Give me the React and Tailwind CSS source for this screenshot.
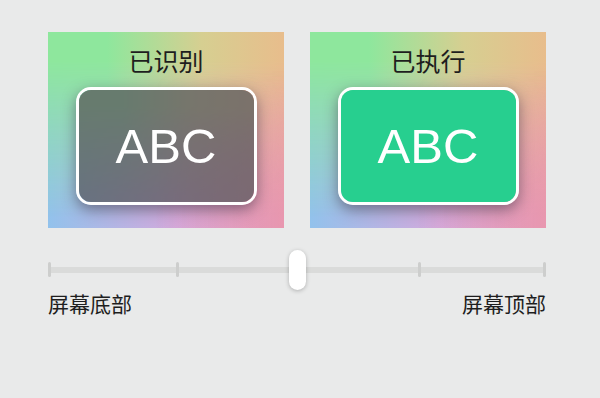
const cjk = { fontFamily: '"Noto Sans CJK SC", "Noto Sans", sans-serif' };
const latin = { fontFamily: '"Liberation Sans", Arial, sans-serif' };

function Rainbow() {
  return (
    <>
      <div className="absolute inset-0 bg-[linear-gradient(to_right,#92c2ec,#d3a9dc_55%,#e898b6)]" />
      <div className="absolute inset-0 bg-[linear-gradient(to_right,#8ee79d_25%,#d6cf91_65%,#e8bd8c)] [mask-image:linear-gradient(to_bottom,black_15%,rgba(0,0,0,0.55)_50%,transparent_95%)]" />
      <div className="absolute inset-0 bg-[linear-gradient(to_right,transparent_45%,rgba(232,150,170,0.55))] [mask-image:linear-gradient(to_bottom,transparent_20%,black_80%)]" />
    </>
  );
}

function RainbowPanel({ label, children }) {
  return (
    <div className="relative h-[196px] overflow-hidden">
      <Rainbow />
      <div className="relative flex flex-col items-center pt-[13px]">
        <div className="text-[25px] leading-[30px] text-[#1e1e1e]" style={cjk}>
          {label}
        </div>
        <div className="mt-[12px]">{children}</div>
      </div>
    </div>
  );
}

function Tag({ tone }) {
  return (
    <div className="relative h-[118px] w-[181px] overflow-hidden rounded-[15px] border-[3px] border-white shadow-[0_5px_14px_rgba(50,40,60,0.5)]">
      {tone === 'dim' ? (
        <>
          <Rainbow />
          <div className="absolute inset-0 bg-[rgba(92,92,98,0.78)]" />
        </>
      ) : (
        <div className="absolute inset-0 bg-[#27cf8f]" />
      )}
      <div
        className="relative flex h-full items-center justify-center text-[49px] leading-none text-white"
        style={latin}
      >
        ABC
      </div>
    </div>
  );
}

export default function App() {
  const ticks = [0, 128, 370, 495];

  return (
    <div className="h-[398px] w-[600px] bg-[#e9eaea] px-[48px] pt-[32px]">
      <div className="grid grid-cols-2 gap-[26px] pr-[6px]">
        <RainbowPanel label="已识别">
          <Tag tone="dim" />
        </RainbowPanel>
        <RainbowPanel label="已执行">
          <Tag tone="green" />
        </RainbowPanel>
      </div>

      <div className="relative mt-[22px] h-[40px] w-[498px]">
        <div className="absolute left-0 right-0 top-[17px] h-[6px] rounded-full bg-[#dadbda]" />
        {ticks.map((x) => (
          <div
            key={x}
            className="absolute top-[12px] h-[15px] w-[3px] rounded-full bg-[#cdcecd]"
            style={{ left: x }}
          />
        ))}
        <div className="absolute left-[241px] top-0 h-[40px] w-[17px] rounded-full bg-white shadow-[0_1px_4px_rgba(0,0,0,0.25)]" />
      </div>

      <div className="mt-0 flex w-[498px] justify-between text-[21px] leading-[26px] text-[#1e1e1e]" style={cjk}>
        <span>屏幕底部</span>
        <span>屏幕顶部</span>
      </div>
    </div>
  );
}
